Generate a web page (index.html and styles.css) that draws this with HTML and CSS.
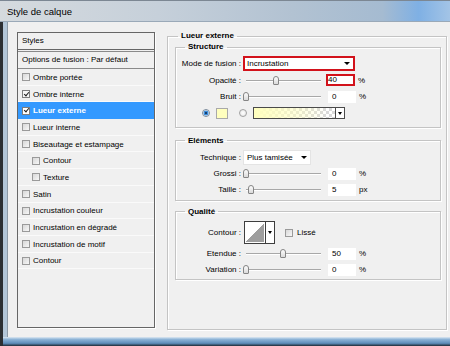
FILE: index.html
```html
<!doctype html>
<html lang="fr">
<head>
	<meta charset="utf-8">
	<title>Style de calque</title>
	<link rel="stylesheet" href="styles.css">
</head>
<body>
	<div class="window">
		<div class="titlebar">Style de calque</div>
		<div class="frame">
			<div class="client">

				<!-- liste des effets -->
				<div class="styles-panel">
					<div class="panel-head">Styles</div>
					<div class="panel-opt">Options de fusion : Par défaut</div>
					<ul class="fx-list">
						<li><span class="cb"></span>Ombre portée</li>
						<li><span class="cb on"></span>Ombre interne</li>
						<li class="sel"><span class="cb on"></span>Lueur externe</li>
						<li><span class="cb"></span>Lueur interne</li>
						<li><span class="cb"></span>Biseautage et estampage</li>
						<li class="sub"><span class="cb"></span>Contour</li>
						<li class="sub"><span class="cb"></span>Texture</li>
						<li><span class="cb"></span>Satin</li>
						<li><span class="cb"></span>Incrustation couleur</li>
						<li><span class="cb"></span>Incrustation en dégradé</li>
						<li><span class="cb"></span>Incrustation de motif</li>
						<li><span class="cb"></span>Contour</li>
					</ul>
				</div>

				<!-- réglages -->
				<fieldset class="group outer">
					<legend>Lueur externe</legend>

					<fieldset class="group sect structure">
						<legend>Structure</legend>
						<div class="row">
							<span class="lbl">Mode de fusion :</span>
							<div class="select mode">Incrustation</div>
						</div>
						<div class="row">
							<span class="lbl">Opacité :</span>
							<div class="slider"><span class="thumb" style="left:30px"></span></div>
							<div class="num mark">40</div>
							<span class="unit">%</span>
						</div>
						<div class="row">
							<span class="lbl">Bruit :</span>
							<div class="slider"><span class="thumb" style="left:0px"></span></div>
							<div class="num">0</div>
							<span class="unit">%</span>
						</div>
						<div class="row colors">
							<span class="radio on"></span>
							<span class="swatch"></span>
							<span class="radio"></span>
							<div class="grad"><span class="grad-fill"></span><span class="drop"></span></div>
						</div>
					</fieldset>

					<fieldset class="group sect elements">
						<legend>Eléments</legend>
						<div class="row">
							<span class="lbl">Technique :</span>
							<div class="select tech">Plus tamisée</div>
						</div>
						<div class="row">
							<span class="lbl">Grossi :</span>
							<div class="slider"><span class="thumb" style="left:0px"></span></div>
							<div class="num">0</div>
							<span class="unit">%</span>
						</div>
						<div class="row">
							<span class="lbl">Taille :</span>
							<div class="slider"><span class="thumb" style="left:5px"></span></div>
							<div class="num">5</div>
							<span class="unit">px</span>
						</div>
					</fieldset>

					<fieldset class="group sect quality">
						<legend>Qualité</legend>
						<div class="row contour-row">
							<span class="lbl">Contour :</span>
							<div class="contour"><span class="curve"></span><span class="drop"></span></div>
							<span class="cb lisse"></span>
							<span>Lissé</span>
						</div>
						<div class="row">
							<span class="lbl">Etendue :</span>
							<div class="slider"><span class="thumb" style="left:37px"></span></div>
							<div class="num">50</div>
							<span class="unit">%</span>
						</div>
						<div class="row">
							<span class="lbl">Variation :</span>
							<div class="slider"><span class="thumb" style="left:0px"></span></div>
							<div class="num">0</div>
							<span class="unit">%</span>
						</div>
					</fieldset>
				</fieldset>

			</div>
		</div>
	</div>
</body>
</html>
```

FILE: styles.css
```css
:root {
	--panel: #f0f0f0;
	--line: #c4c4c4;
	--dark-line: #666;
	--red: #d2121b;
	--select: #3399ff;
}

body {
	margin: 0;
	background: #2c2f33;
	font-family: "Liberation Sans", Arial, sans-serif;
	font-size: 8px;
	color: #000;
}
.window {
	width: 450px;
	height: 346px;
	overflow: hidden;
}
.titlebar {
	height: 22px;
	box-sizing: border-box;
	padding-left: 7px;
	line-height: 23px;
	font-size: 9.5px;
	background: linear-gradient(to right, #d5dade 0%, #c6d0da 35%, #b2c2d2 65%, #a5bbd1 85%, #7fb0e4 93%, #a3c4e6 100%);
	box-shadow: inset 0 1px #7c8793, inset 0 -1px #9aa9b8;
}
.frame {
	margin-left: 3px;
	height: 324px;
	box-sizing: border-box;
	padding: 0 0 9px 4px;
	background:
		linear-gradient(#dfe9f2, #8fb5d8 25%, #5d8cb9 70%, #1f2a35) bottom / 100% 9px no-repeat,
		#b3c6d8;
}
.client {
	height: 315px;
	box-sizing: border-box;
	background: var(--panel);
	border-left: 1px solid #8d9aa7;
	display: flex;
	align-items: flex-start;
	padding: 10px 0 0 9px;
}

/* liste de gauche */
.styles-panel {
	width: 138px;
	height: 296px;
	box-sizing: border-box;
	border: 1px solid var(--dark-line);
	box-shadow: 1px 1px 0 #fff;
}
.panel-head {
	height: 16px;
	line-height: 16px;
	padding-left: 4px;
	border-bottom: 1px solid var(--dark-line);
}
.panel-opt {
	height: 16px;
	line-height: 16px;
	margin-top: 1px;
	padding-left: 4px;
	border-top: 1px solid #8a8a8a;
	border-bottom: 1px solid #8a8a8a;
}
.fx-list {
	list-style: none;
	margin: 0;
	padding: 0;
}
.fx-list li {
	height: 16.7px;
	box-sizing: border-box;
	display: flex;
	align-items: center;
	padding-left: 4px;
	white-space: nowrap;
	box-shadow: inset 0 -1px #fafafa;
}
.fx-list li.sub {
	padding-left: 14px;
}
.fx-list li.sel {
	background: var(--select);
	color: #fff;
	font-weight: bold;
	box-shadow: none;
}
.cb {
	flex: none;
	width: 8px;
	height: 8px;
	box-sizing: border-box;
	border: 1px solid #9a9a9a;
	background: linear-gradient(135deg, #d8d8d8, #f7f7f7);
	margin-right: 3px;
	position: relative;
}
.cb.on {
	border-color: #7d7d7d;
	background: #f6f6f6;
}
.cb.on::after {
	content: "";
	position: absolute;
	left: 1.5px;
	top: -0.5px;
	width: 2px;
	height: 4px;
	border: solid #1d1d1d;
	border-width: 0 1.3px 1.3px 0;
	transform: rotate(40deg);
}
.sel .cb.on {
	background: #fff;
}

/* groupes */
.group {
	margin: 0;
	padding: 0;
	min-width: 0;
	border: 1px solid var(--line);
	box-shadow: inset 1px 1px #fff, 1px 1px #fff;
	box-sizing: border-box;
}
.group > legend {
	padding: 0 3px;
	margin-left: 9px;
	font-weight: bold;
	line-height: 10px;
}
.outer {
	margin: -1px 0 0 12px;
	width: 280px;
	height: 299px;
	padding: 1px 5px 0 7px;
}
.outer > legend {
	margin-left: 3px;
}
.sect {
	width: 266px;
}
.structure {
	padding: 3px 0 5px;
}
.elements {
	margin-top: 8px;
	padding: 4px 0 2px;
}
.elements .row {
	height: 16px;
}
.quality {
	margin-top: 6px;
	padding: 3px 0 1px;
}
.quality .row {
	height: 16px;
}
.quality .contour-row {
	height: 26px;
}

.row {
	display: flex;
	align-items: center;
	height: 16.7px;
	white-space: nowrap;
}
.lbl {
	width: 65px;
	margin-right: 2px;
	text-align: right;
}

.select {
	display: flex;
	align-items: center;
	box-sizing: border-box;
	height: 15px;
	background: #fff;
	padding-left: 2px;
}
.select::after {
	content: "";
	margin-left: auto;
	margin-right: 3px;
	border-left: 3px solid transparent;
	border-right: 3px solid transparent;
	border-top: 3px solid #000;
}
.select.mode {
	width: 112px;
	border: 2px solid var(--red);
}
.select.tech {
	width: 68px;
	border: 1px solid #e4e4e4;
	padding-left: 3px;
}

.slider {
	position: relative;
	width: 80px;
	height: 11px;
}
.slider::before {
	content: "";
	position: absolute;
	left: 3px;
	right: 2px;
	top: 5px;
	height: 1px;
	background: #a8a8a8;
	box-shadow: 0 1px #fff;
}
.thumb {
	position: absolute;
	top: 1px;
	width: 6px;
	height: 9px;
	box-sizing: border-box;
	border: 1px solid #858585;
	border-radius: 3px 3px 1px 1px;
	background: linear-gradient(#fdfdfd, #dadada);
}

.num {
	width: 28px;
	height: 12px;
	line-height: 12px;
	box-sizing: border-box;
	margin-left: 5px;
	padding-left: 4px;
	background: #fff;
}
.num.mark {
	width: 29px;
	margin-left: 3px;
	padding-left: 0;
	line-height: 8px;
	border: 2px solid var(--red);
}
.unit {
	margin-left: 3px;
}

/* couleur */
.radio {
	flex: none;
	width: 8px;
	height: 8px;
	box-sizing: border-box;
	border-radius: 50%;
	border: 1px solid #a0a0a0;
	background: radial-gradient(circle, #fff, #e2e2e2);
}
.radio.on {
	margin-left: 26px;
	border-color: #7a8a9a;
	background: radial-gradient(circle, #153f70 0 0.8px, #3c8ddb 1.3px 2.2px, #e6edf4 2.7px);
}
.swatch {
	width: 12px;
	height: 11px;
	box-sizing: border-box;
	margin: 0 11px 0 6px;
	border: 1px solid #a9a9a9;
	background: #ffffbe;
}
.grad {
	display: flex;
	width: 92px;
	height: 12px;
	box-sizing: border-box;
	margin-left: 6px;
	border: 1px solid #4a4a4a;
}
.grad-fill {
	flex: 1;
	background:
		linear-gradient(to right, #ffffbe, rgba(255, 255, 190, 0.5) 55%, rgba(255, 255, 190, 0) 90%),
		repeating-conic-gradient(#d9d9d9 0 25%, #fff 0 50%) 0 0 / 6px 6px;
}
.drop {
	display: flex;
	align-items: center;
	justify-content: center;
	width: 8px;
	background: #fff;
	border-left: 1px solid #4a4a4a;
}
.drop::after {
	content: "";
	border-left: 2px solid transparent;
	border-right: 2px solid transparent;
	border-top: 3px solid #000;
}

/* contour */
.contour {
	display: flex;
	width: 31px;
	height: 23px;
	box-sizing: border-box;
	margin-left: 1px;
	border: 1px solid #3e3e3e;
}
.curve {
	flex: 1;
	background: linear-gradient(to top left, #9e9e9e 50%, #fff 50%);
	box-shadow: inset 0 0 0 1px #fff;
}
.contour .drop {
	border-left-color: #3e3e3e;
}
.cb.lisse {
	margin-left: 10px;
	margin-right: 4px;
}
```
